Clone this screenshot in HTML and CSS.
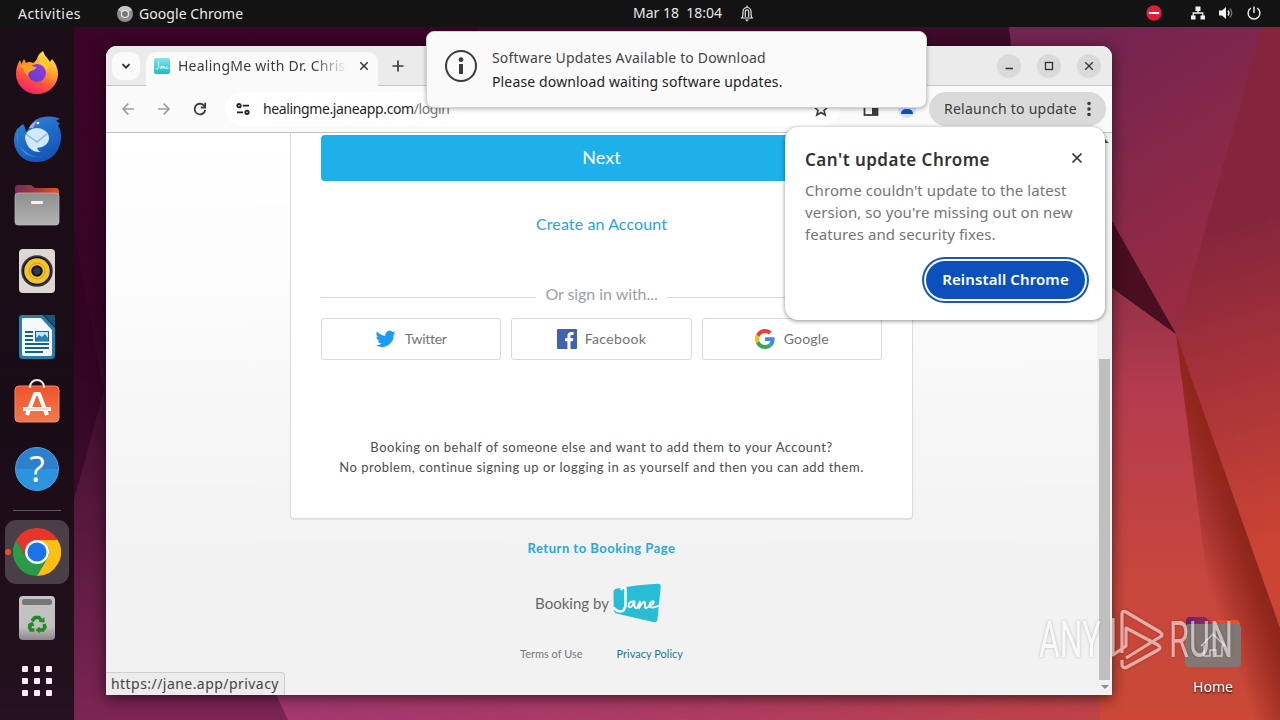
FILE: index.html
```html
<!DOCTYPE html>
<html lang="en">
<head>
<meta charset="utf-8">
<title>Desktop</title>
<link rel="stylesheet" href="styles.css">
</head>
<body>
<div class="screen">
  <svg class="wallpaper" width="1280" height="720" viewBox="0 0 1280 720">
    <defs>
      <linearGradient id="wLeft" x1="0" y1="0" x2="0" y2="1"><stop offset="0" stop-color="#3c0328"/><stop offset=".45" stop-color="#370525"/><stop offset=".6" stop-color="#471233"/><stop offset="1" stop-color="#7c2554"/></linearGradient>
      <linearGradient id="wBottom" x1="0" y1="0" x2="1" y2="0"><stop offset="0" stop-color="#a33870"/><stop offset=".45" stop-color="#ae3b60"/><stop offset="1" stop-color="#c8473a"/></linearGradient>
      <linearGradient id="wTop" gradientUnits="userSpaceOnUse" x1="1080" y1="40" x2="1220" y2="260"><stop offset="0" stop-color="#722450"/><stop offset="1" stop-color="#962b43"/></linearGradient>
      <linearGradient id="wRight" gradientUnits="userSpaceOnUse" x1="1200" y1="230" x2="1290" y2="540"><stop offset="0" stop-color="#84253c"/><stop offset=".5" stop-color="#a93439"/><stop offset="1" stop-color="#cc4433"/></linearGradient>
      <linearGradient id="wRose" x1="0" y1="0" x2="0" y2="1"><stop offset="0" stop-color="#8f3046"/><stop offset=".25" stop-color="#b43b4e"/><stop offset=".7" stop-color="#c8473c"/><stop offset="1" stop-color="#ca4835"/></linearGradient>
      <linearGradient id="wShade" gradientUnits="userSpaceOnUse" x1="1198" y1="560" x2="1252" y2="541"><stop offset="0" stop-color="#8a211c" stop-opacity="0"/><stop offset=".8" stop-color="#92271c"/><stop offset="1" stop-color="#8f241c"/></linearGradient>
    </defs>
    <rect width="1280" height="720" fill="url(#wLeft)"/>
    <path d="M74 235L104 390L74 500Z" fill="#2f0320" opacity=".6"/>
    <path d="M480 27H1010L1030 70H440Z" fill="#3d0a29"/>
    <path d="M276 694L288 720H1280V600H276Z" fill="url(#wBottom)"/>
    <path d="M1009 27H1280V340H1176L1018 110Z" fill="url(#wTop)"/>
    <path d="M1262 27H1280V640L1176 334Z" fill="url(#wRight)"/>
    <path d="M1100 279L1176 334L1280 628V720H1100Z" fill="url(#wRose)"/>
    <path d="M1176 334L1280 628V720H1225Z" fill="url(#wShade)"/>
    <path d="M1100 200L1176 334L1100 278Z" fill="#490e1f"/>
  </svg>

  <header class="topbar">
    <span class="activities">Activities</span>
    <span class="app-menu">
      <svg width="16" height="16" viewBox="0 0 16 16"><circle cx="8" cy="8" r="8" fill="#8d8d8d"/><path d="M8 8L1 4A8 8 0 0 1 15 4Z" fill="#c5c5c5"/><circle cx="8" cy="8" r="4" fill="#eee"/><circle cx="8" cy="8" r="2.9" fill="#777"/></svg>
      <span class="app-name">Google Chrome</span>
    </span>
    <span class="clock">Mar 18&nbsp; 18:04</span>
    <svg class="bell" width="14" height="17" viewBox="0 0 14 17" fill="none" stroke="#e8e8e8" stroke-width="1.200"><path d="M.8 13H13.200M2 13C3 11.500 3 9.500 3 6.500A4 4 0 0 1 11 6.500C11 9.500 11 11.500 12 13M5.300 12V6.500A1.700 1.700 0 0 1 8.700 6.500V12M7 .6V2.500"/><path d="M5 14.500H9L7 16.500Z" fill="#e8e8e8" stroke="none"/></svg>
    <div class="tray">
      <svg class="dnd" width="16" height="16" viewBox="0 0 16 16"><circle cx="8" cy="8" r="7.700" fill="#e01b3c"/><path d="M2.800 8H13.200" stroke="#fff" stroke-width="2"/></svg>
      <svg width="16" height="16" viewBox="0 0 16 16" fill="#f2f2f2"><path d="M5.500 1.500h5v4.500h-5zM1 10.500h4.500v4H1zM10.500 10.500H15v4h-4.500z"/><path d="M8 5V8M3.200 11V8H12.800V11" fill="none" stroke="#f2f2f2" stroke-width="1.300"/></svg>
      <svg width="16" height="16" viewBox="0 0 16 16"><path d="M1 5.500H4L8 2V14L4 10.500H1Z" fill="#f2f2f2"/><path d="M10 5.500Q11.800 8 10 10.500" fill="none" stroke="#f2f2f2" stroke-width="1.400"/><path d="M12 3.500Q15.400 8 12 12.500" fill="none" stroke="#777" stroke-width="1.300"/></svg>
      <svg width="16" height="16" viewBox="0 0 16 16" fill="none" stroke="#f2f2f2" stroke-width="1.400"><path d="M8 1.500V8M4.800 3.200A5.900 5.900 0 1 0 11.200 3.200"/></svg>
    </div>
  </header>

  <div class="below">
    <nav class="dock">
      <div class="dock-item">
        <svg width="44" height="44" viewBox="0 0 44 44"><defs><linearGradient id="ff" x1=".8" y1="0" x2=".3" y2="1"><stop offset="0" stop-color="#fff04a"/><stop offset=".4" stop-color="#ffa32a"/><stop offset=".7" stop-color="#ff4f3d"/><stop offset="1" stop-color="#f01f70"/></linearGradient><linearGradient id="fv" x1="0" y1="1" x2="1" y2="0"><stop offset="0" stop-color="#5b3fd0"/><stop offset="1" stop-color="#9a3ae0"/></linearGradient></defs><path d="M5 9L6.500 13L9 8L11 12Q14 10 18 12Q20 11 22 8Q23 3 28 0Q29 4 33 8L35 11L37 8Q43 15 43 23A21 20 0 0 1 1 23Q1 15 5 9Z" fill="url(#ff)"/><circle cx="22" cy="22" r="9" fill="url(#fv)"/><path d="M4 15Q11 12 17 15Q19 16 22 16Q20 19 16 20Q13 21 13 25Q9 22 9 18Z" fill="#ffa02c"/><path d="M23 12Q30 13 31 20Q35 17 34 11L29 6Q26 9 23 12Z" fill="#ffc934"/></svg>
      </div>
      <div class="dock-item">
        <svg width="48" height="48" viewBox="0 0 48 48"><defs><linearGradient id="tb" x1="0" y1="0" x2=".5" y2="1"><stop offset="0" stop-color="#2f86dd"/><stop offset="1" stop-color="#1556b5"/></linearGradient></defs><path d="M16 13Q21 2 34 1.500Q43 1 47 4L43 5.500L47 9L45 10Q50 19 47 29Q42 46 25 47Q8 48 2 32Q-1 22 4 14L10 9Q12 11 13 17Z" fill="url(#tb)"/><path d="M5 14Q1 30 12 36Q20 44 32 41Q16 45 8 34Q3 27 5 14Z" fill="#60b0f4" opacity=".6"/><path d="M16 13Q18 8 24 6L20 13Z" fill="#b8a3df"/><path d="M12 23A12 10 0 1 1 24 33Q25 36 28 37Q15 38 12 23Z" fill="#cfeafa"/><path d="M13 19L24 27L35 18" fill="none" stroke="#9ab4cb" stroke-width="1.500"/><circle cx="25" cy="8" r="1.300" fill="#fff"/></svg>
      </div>
      <div class="dock-item">
        <svg width="46" height="42" viewBox="0 0 46 42"><defs><linearGradient id="fo" x1="0" x2="1"><stop offset="0" stop-color="#7a2a55"/><stop offset=".5" stop-color="#a8383f"/><stop offset="1" stop-color="#ea5420"/></linearGradient><linearGradient id="fg" x1="0" y1="0" x2="0" y2="1"><stop offset="0" stop-color="#8f8f8f"/><stop offset="1" stop-color="#b2b2b2"/></linearGradient></defs><path d="M1 4Q1 1 4 1H17L21 4H42Q45 4 45 8V30H1Z" fill="url(#fo)"/><rect x="1" y="9" width="44" height="32" rx="3" fill="url(#fg)" stroke="#bbb" stroke-width=".7"/><rect x="17" y="17" width="12" height="3" rx="1" fill="#f4f4f4"/></svg>
      </div>
      <div class="dock-item">
        <svg width="36" height="44" viewBox="0 0 36 44"><rect width="36" height="44" rx="4" fill="#ddd9d2"/><circle cx="18" cy="22" r="15.800" fill="#36383e"/><circle cx="18" cy="22" r="14.200" fill="#151515"/><circle cx="18" cy="22" r="12.800" fill="#f5c22c"/><circle cx="18" cy="22" r="8" fill="none" stroke="#caa024" stroke-width="1"/><circle cx="18" cy="22" r="5.800" fill="#101820"/><circle cx="18" cy="22" r="3.500" fill="#2c3a4a"/></svg>
      </div>
      <div class="dock-item">
        <svg width="38" height="46" viewBox="0 0 38 46"><path d="M4 1H25L37 14V41Q37 45 33 45H4Q1 45 1 41V4Q1 1 4 1Z" fill="#267fa8"/><path d="M26 1H37V13Z" fill="#15587e"/><path d="M5 4H23L34 16V40Q34 42 32 42H6Q4 42 4 40V6Q4 4 5 4Z" fill="#f4f9fb"/><path d="M7 18H15M7 22H15M7 26H15M7 30H31M7 34H31M7 38H25" stroke="#17618b" stroke-width="2"/><rect x="17.500" y="17.500" width="13" height="9.500" fill="#bfe7fa" stroke="#17618b"/><path d="M18 27V24L21 21L24 23L27 20L30 24V27Z" fill="#2481b6"/></svg>
      </div>
      <div class="dock-item store">
        <svg width="46" height="46" viewBox="0 0 46 46"><defs><linearGradient id="so" x1="0" y1="0" x2="0" y2="1"><stop offset="0" stop-color="#f0522a"/><stop offset="1" stop-color="#f07a4d"/></linearGradient></defs><rect x="1" y="8" width="44" height="36" rx="4" fill="url(#so)" stroke="#f58a66"/><path d="M13 37L21 16H25L33 37M9 31H37" fill="none" stroke="#fff" stroke-width="4" stroke-linejoin="round"/><path d="M11 31H35" stroke="#e9b59f"/><path d="M16 10V9A7 7 0 0 1 30 9V10" fill="none" stroke="#f3e9e4" stroke-width="2"/></svg>
      </div>
      <div class="dock-item">
        <span class="help">?</span>
      </div>
      <div class="dock-sep"></div>
      <div class="dock-active">
        <svg width="48" height="48" viewBox="0 0 48 48"><path d="M24 12H44.800A24 24 0 0 0 3.200 12L13.600 30A12 12 0 0 1 24 12Z" fill="#e8352b"/><path d="M34.400 30L24 48A24 24 0 0 0 44.800 12H24A12 12 0 0 1 34.400 30Z" fill="#fcbf12"/><path d="M13.600 30L3.200 12A24 24 0 0 0 24 48L34.400 30A12 12 0 0 1 13.600 30Z" fill="#289a48"/><circle cx="24" cy="24" r="12" fill="#fff"/><circle cx="24" cy="24" r="9.600" fill="#1a73e8"/></svg>
      </div>
      <div class="dock-item">
        <svg width="36" height="44" viewBox="0 0 36 44"><defs><linearGradient id="tr" x1="0" y1="0" x2="0" y2="1"><stop offset="0" stop-color="#c4c4c4"/><stop offset=".7" stop-color="#c0c0c0"/><stop offset="1" stop-color="#8b858b"/></linearGradient></defs><rect width="36" height="44" rx="4" fill="url(#tr)"/><rect x="3" y="3" width="30" height="6" rx="2.500" fill="#777"/><g fill="none" stroke="#1e8c22" stroke-width="3.600"><path d="M13 25L16 21.500H20L22 24"/><path d="M25 28L26 31L24 34H20"/><path d="M15.500 34H12L10.500 31L12 28"/></g><path d="M19.500 26L25.500 26.500L25.500 21ZM20.500 30.500V37.500L16.800 34ZM8.500 28.500L13.500 25.500L15.500 30.500Z" fill="#1e8c22"/></svg>
      </div>
      <div class="dock-apps">
        <i></i><i></i><i></i><i></i><i></i><i></i><i></i><i></i><i></i>
      </div>
    </nav>
  </div>

  <main class="window">
    <div class="tabstrip">
      <div class="tab-search"><svg width="12" height="12" viewBox="0 0 12 12" fill="none" stroke="#333" stroke-width="1.900"><path d="M2.500 4.200L6 7.700L9.500 4.200"/></svg></div>
      <div class="tab">
        <svg width="16" height="16" viewBox="0 0 16 16"><defs><linearGradient id="fav" x1="0" y1="0" x2="0" y2="1"><stop offset="0" stop-color="#8be3e8"/><stop offset="1" stop-color="#17bcc9"/></linearGradient></defs><rect width="16" height="16" rx="2" fill="url(#fav)"/><path d="M4.500 3.500V10Q3.500 12.500 1.500 10.500M7.500 8Q5.500 9 6.500 10.500Q8 10 8 8V10.500L10 8V10.500Q11 8 11.500 10.500Q13 10 13 8.500Q11.500 9 13 10.700L15 10" fill="none" stroke="#e9fbfc" stroke-width=".8"/></svg>
        <span class="tab-title">HealingMe with Dr. Chris</span>
        <svg width="10" height="10" viewBox="0 0 10 10" stroke="#3c3c3c" stroke-width="1.600"><path d="M1.300 1.300L8.700 8.700M8.700 1.300L1.300 8.700"/></svg>
      </div>
      <svg class="tab-new" width="12" height="12" viewBox="0 0 12 12" stroke="#3c3c3c" stroke-width="1.700"><path d="M6 .5V11.500M.5 6H11.500"/></svg>
      <div class="win-controls">
        <span><svg width="10" height="10" viewBox="0 0 10 10"><path d="M1.500 7.500H9" stroke="#333" stroke-width="1.300"/></svg></span>
        <span><svg width="10" height="10" viewBox="0 0 10 10"><rect x="1.500" y="1.500" width="7" height="7" fill="none" stroke="#333" stroke-width="1.300"/></svg></span>
        <span><svg width="10" height="10" viewBox="0 0 10 10"><path d="M1.200 1.200L8.800 8.800M8.800 1.200L1.200 8.800" stroke="#333" stroke-width="1.300"/></svg></span>
      </div>
    </div>

    <div class="toolbar">
      <svg width="14" height="14" viewBox="0 0 14 14" fill="none" stroke="#a0a0a0" stroke-width="1.700"><path d="M13 7H2M7.300 1.700L2 7L7.300 12.300"/></svg>
      <svg width="14" height="14" viewBox="0 0 14 14" fill="none" stroke="#a0a0a0" stroke-width="1.700"><path d="M1 7H12M6.700 1.700L12 7L6.700 12.300"/></svg>
      <svg width="14" height="14" viewBox="0 0 14 14" fill="none" stroke="#3c3c3c" stroke-width="1.800"><path d="M12.200 7.800A5.300 5.300 0 1 1 10.800 3.400L12 4.800"/><path d="M12.200 .8V5.500H7.800" /></svg>
      <div class="omnibox">
        <svg width="14" height="14" viewBox="0 0 14 14" fill="none" stroke="#202020" stroke-width="1.800"><circle cx="3" cy="3.700" r="1.700"/><path d="M6.700 3.700H13M1 10.300H7"/><circle cx="11" cy="10.300" r="1.700"/></svg>
        <span class="url">healingme.janeapp.com<span class="url-path">/login</span></span>
        <svg class="star" width="16" height="16" viewBox="0 0 16 16" fill="none" stroke="#3c3c3c" stroke-width="1.600"><path d="M8 1.500L9.900 6L14.500 6.300L11 9.400L12.200 14L8 11.500L3.800 14L5 9.400L1.500 6.300L6.100 6Z"/></svg>
      </div>
      <svg class="panel-icon" width="16" height="16" viewBox="0 0 16 16"><rect x="1.500" y="2" width="13" height="12" fill="none" stroke="#3c3c3c" stroke-width="1.800"/><path d="M9 2H15V14H9Z" fill="#3c3c3c"/></svg>
      <svg class="avatar" width="20" height="20" viewBox="0 0 20 20"><circle cx="10" cy="10" r="9" fill="#d3e3fd"/><circle cx="10" cy="5" r="3" fill="#0b57d0"/><path d="M4 15Q4 10 10 10T16 15Z" fill="#0b4fc0"/></svg>
      <div class="relaunch"><span>Relaunch to update</span>
        <svg width="4" height="16" viewBox="0 0 4 16" fill="#3c3c3c"><circle cx="2" cy="2.500" r="1.800"/><circle cx="2" cy="8" r="1.800"/><circle cx="2" cy="13.500" r="1.800"/></svg>
      </div>
    </div>

    <div class="viewport">
      <div class="page">
        <section class="card">
          <div class="next">Next</div>
          <div class="create">Create an Account</div>
          <div class="divider"><span>Or sign in with...</span></div>
          <div class="providers">
            <div class="provider twitter">
              <svg width="20" height="18" viewBox="0 0 24 20" fill="#1d9bf0"><path d="M23.600 2.400a9.700 9.700 0 0 1-2.800.8 4.900 4.900 0 0 0 2.100-2.700 9.700 9.700 0 0 1-3.100 1.200 4.900 4.900 0 0 0-8.400 4.500A13.900 13.900 0 0 1 1.300 1 4.900 4.900 0 0 0 2.800 7.600a4.900 4.900 0 0 1-2.200-.6 4.900 4.900 0 0 0 3.900 4.900 4.900 4.900 0 0 1-2.200.1 4.900 4.900 0 0 0 4.600 3.400A9.900 9.900 0 0 1-.3 17.400a13.900 13.900 0 0 0 21.400-12.400 9.900 9.900 0 0 0 2.500-2.600z"/></svg>
              <span>Twitter</span>
            </div>
            <div class="provider">
              <svg width="20" height="20" viewBox="0 0 20 20"><rect width="20" height="20" rx="1" fill="#4162ae"/><path d="M13.500 20V12.300H16L16.400 9.300H13.500V7.400C13.500 6.500 13.800 6 15 6H16.600V3.200C16.300 3.150 15.300 3.050 14.200 3.050C12 3.050 10.400 4.400 10.400 7V9.300H8V12.300H10.400V20Z" fill="#fff"/></svg>
              <span>Facebook</span>
            </div>
            <div class="provider google">
              <svg width="20" height="20" viewBox="0 0 48 48"><path fill="#EA4335" d="M24 9.500c3.540 0 6.710 1.220 9.210 3.600l6.850-6.850C35.900 2.380 30.470 0 24 0 14.620 0 6.510 5.380 2.560 13.220l7.980 6.190C12.430 13.720 17.740 9.500 24 9.500z"/><path fill="#4285F4" d="M46.980 24.550c0-1.570-.15-3.090-.38-4.550H24v9.020h12.940c-.58 2.960-2.260 5.480-4.780 7.180l7.730 6c4.510-4.180 7.090-10.360 7.090-17.650z"/><path fill="#FBBC05" d="M10.530 28.590c-.48-1.450-.76-2.990-.76-4.590s.27-3.140.76-4.590l-7.980-6.190C.92 16.460 0 20.120 0 24c0 3.880.92 7.540 2.560 10.780l7.970-6.190z"/><path fill="#34A853" d="M24 48c6.480 0 11.930-2.130 15.890-5.810l-7.730-6c-2.150 1.450-4.920 2.300-8.160 2.300-6.260 0-11.570-4.220-13.470-9.910l-7.980 6.190C6.510 42.620 14.620 48 24 48z"/></svg>
              <span>Google</span>
            </div>
          </div>
          <p class="note">Booking on behalf of someone else and want to add them to your Account?<br>No problem, continue signing up or logging in as yourself and then you can add them.</p>
        </section>
        <a class="return">Return to Booking Page</a>
        <div class="brand"><span>Booking by</span>
          <svg width="48" height="40" viewBox="0 0 48 40"><path d="M4 5.500Q22 2 45 .7Q48 .7 47.700 4L44.500 36Q44 40 40 39L3.500 30.500Q.8 29.800 .7 27L.5 9Q.5 6.200 4 5.500Z" fill="#27bdd6"/><path d="M8.500 6Q12 3 12.500 6V22Q12 28.500 7 28.500Q3 28 1 25" fill="none" stroke="#fff" stroke-width="2.600" stroke-linecap="round"/><path d="M21.500 18.500Q15.500 18 15.500 23Q17.500 27 21.500 19Q20.500 26 24 25L27 18.500L26 25Q31 16.500 32 19.500V24.500Q34 26 37 22M36.500 22.500Q42 21 40.500 18.500Q37 18 36.500 22Q37 27 46 22.500" fill="none" stroke="#fff" stroke-width="1.900" stroke-linecap="round" stroke-linejoin="round"/></svg>
        </div>
        <div class="legal"><span>Terms of Use</span><span class="privacy">Privacy Policy</span></div>
      </div>
      <div class="scrollbar"><i class="sb-up"></i><div class="sb-thumb"></div><i class="sb-down"></i></div>
      <div class="status">https://jane.app/privacy</div>
    </div>
  </main>

  <aside class="bubble">
    <div class="bubble-head"><span class="bubble-title">Can't update Chrome</span>
      <svg width="12" height="12" viewBox="0 0 12 12" stroke="#333" stroke-width="1.700"><path d="M1.500 1.500L10.500 10.500M10.500 1.500L1.500 10.500"/></svg>
    </div>
    <p class="bubble-text">Chrome couldn't update to the latest<br>version, so you're missing out on new<br>features and security fixes.</p>
    <div class="reinstall">Reinstall Chrome</div>
  </aside>

  <aside class="toast">
    <svg width="32" height="32" viewBox="0 0 32 32"><circle cx="16" cy="16" r="15" fill="none" stroke="#3b3b3b" stroke-width="2"/><circle cx="16" cy="9.700" r="2.400" fill="#3b3b3b"/><rect x="14" y="14" width="4" height="10" fill="#3b3b3b"/></svg>
    <div><div class="toast-title">Software Updates Available to Download</div><div class="toast-body">Please download waiting software updates.</div></div>
  </aside>

  <div class="home">
    <svg width="56" height="52" viewBox="0 0 56 52"><defs><linearGradient id="hf" x1="0" x2="1"><stop offset="0" stop-color="#6d1f74"/><stop offset=".38" stop-color="#8c2760"/><stop offset=".5" stop-color="#d84a38"/><stop offset="1" stop-color="#ec5522"/></linearGradient></defs><path d="M1 5Q1 1 5 1H20L24 4H51Q55 4 55 9V30H1Z" fill="url(#hf)"/><rect x="0" y="8" width="56" height="43" rx="4" fill="#827773"/><path d="M16 30L28 18L40 30M19 29V40H25V34H31V40H37V29" fill="none" stroke="#ccc" stroke-width="1.500"/></svg>
    <span>Home</span>
  </div>
  <svg class="watermark" width="200" height="70" viewBox="0 0 200 70">
    <text x="3" y="49" textLength="62" lengthAdjust="spacingAndGlyphs">ANY</text>
    <text x="133" y="49" textLength="64" lengthAdjust="spacingAndGlyphs">RUN</text>
    <g class="mark"><path d="M86 45V6Q86 2 90 4L124 24Q128 27 124 29L90 50"/><path d="M77 10V47L90 38V20L122 37Q126 40 122 42L91 59Q87 61 86 57V52"/></g>
  </svg>
</div>
</body>
</html>
```
FILE: styles.css
```css
* { box-sizing: border-box; }
body { margin: 0; font-family: "Noto Sans", "Open Sans", sans-serif; overflow: hidden; }
svg { display: block; flex: none; }
.screen { position: relative; width: 1280px; height: 720px; overflow: hidden; background: #3c0328; white-space: nowrap; }
.wallpaper { position: absolute; left: 0; top: 0; }

/* top panel */
.topbar { position: relative; display: flex; align-items: center; height: 27px; padding: 0 17px 0 18px; background: #131313; color: #e9e9e9; font-size: 14px; line-height: 27px; }
.activities { width: 99px; letter-spacing: .46px; }
.app-menu { display: flex; align-items: center; gap: 6px; width: 516px; }
.app-name { letter-spacing: .06px; }
.clock { width: 107px; padding-bottom: 2px; line-height: 25px; }
.bell { margin-bottom: 1px; }
.tray { display: flex; align-items: center; gap: 12px; margin: 0 1px 1px auto; }
.dnd { margin-right: 16px; }

/* dock */
.below { position: relative; display: flex; height: 693px; }
.dock { width: 74px; padding-top: 13px; background: linear-gradient(#1b0e17, #1a0c16 60%, #25111f); display: flex; flex-direction: column; align-items: center; }
.dock-item { height: 66px; width: 66px; display: flex; align-items: center; justify-content: center; }
.store { padding-bottom: 5px; }
.help { width: 44px; height: 44px; border-radius: 50%; background: linear-gradient(#2c80ce 0 50%, #2c93df 50%); border: 1px solid #4ea1e2; color: #fff; font-family: "Open Sans", sans-serif; font-size: 36px; line-height: 42px; text-align: center; }
.dock-sep { width: 48px; height: 1px; margin: 8px 0 9px; background: #635a60; }
.dock-active { position: relative; width: 64px; height: 64px; border-radius: 11px; background: #4a3f47; display: flex; align-items: center; justify-content: center; margin-bottom: 1px; }
.dock-active::before { content: ""; position: absolute; left: 0; top: 29px; width: 6px; height: 6px; border-radius: 3px; background: #e95420; }
.dock-apps { display: grid; grid-template-columns: repeat(3, 6px); gap: 6px; margin-top: 15px; }
.dock-apps i { width: 6px; height: 6px; border-radius: 1px; background: #fbeefa; }

/* browser window */
.window { position: absolute; left: 106px; top: 46px; width: 1006px; height: 649px; display: flex; flex-direction: column; border-radius: 11px 11px 0 0; overflow: hidden; background: #fafafa; box-shadow: 0 3px 14px rgba(0,0,0,.6); }
.tabstrip { display: flex; align-items: center; height: 40px; padding: 0 11px 0 6px; background: #ebebeb; border-bottom: 1px solid #c4c4c4; }
.tab-search { width: 28px; height: 28px; border-radius: 9px; background: #fafafa; display: flex; align-items: center; justify-content: center; }
.tab { display: flex; align-items: center; width: 232px; height: 34px; margin: 6px 0 0 6px; align-self: flex-start; padding: 0 11px 7px 8px; border-radius: 10px 10px 0 0; background: #fafafa; }
.tab-title { width: 170px; margin: 0 13px 0 8px; font-size: 14px; letter-spacing: .25px; color: #3c3c3c; -webkit-mask-image: linear-gradient(90deg, #000 80%, transparent 101%); mask-image: linear-gradient(90deg, #000 80%, transparent 101%); }
.tab-new { margin-left: 14px; }
.win-controls { display: flex; gap: 16px; margin-left: auto; }
.win-controls span { width: 24px; height: 24px; border-radius: 50%; background: #dadada; display: flex; align-items: center; justify-content: center; }
.toolbar { display: flex; align-items: center; height: 47px; padding: 0 6px 0 15px; background: #fafafa; border-bottom: 1px solid #c4c4c4; }
.toolbar > svg:nth-child(2), .toolbar > svg:nth-child(3) { margin-left: 22px; }
.omnibox { display: flex; align-items: center; width: 615px; height: 34px; margin-left: 18px; padding: 0 11px; border-radius: 17px; background: #fff; }
.url { margin-left: 13px; padding-bottom: 2px; font-size: 14px; color: #1f1f1f; letter-spacing: -.38px; }
.url-path { color: #747474; letter-spacing: -.4px; }
.star { margin-left: auto; }
.panel-icon { margin-left: 23px; }
.avatar { margin: 0 12px 0 18px; }
.relaunch { display: flex; align-items: center; justify-content: space-between; width: 177px; height: 34px; padding: 0 15px; border-radius: 17px; background: #dadada; color: #3c3c3c; font-size: 14px; letter-spacing: .26px; }
.relaunch span { padding-bottom: 2px; }

/* web page */
.viewport { position: relative; display: flex; flex: 1; min-height: 0; }
.page { flex: 1; display: flex; flex-direction: column; align-items: center; background: linear-gradient(#fff, #fcfcfc 25%, #f2f2f2 75%); font-family: Lato, sans-serif; }
.card { width: 623px; height: 386px; padding: 2px 30px 0; background: #fff; border: 1px solid #dcdcdc; border-top: 0; border-radius: 0 0 4px 4px; box-shadow: 0 1px 1px rgba(0,0,0,.08); }
.next { height: 46px; border-radius: 4px; background: #1eb0e9; color: #fff; font-size: 18px; line-height: 44px; text-align: center; letter-spacing: .05px; }
.create { margin-top: 31px; height: 24px; line-height: 24px; text-align: center; font-size: 16px; color: #27a5db; letter-spacing: .1px; }
.divider { display: flex; align-items: center; gap: 9px; margin-top: 46px; height: 26px; font-size: 16px; color: #9c9fa5; letter-spacing: -.06px; }
.divider::before, .divider::after { content: ""; flex: 1; height: 1px; margin-top: 4px; background: #d7d7d9; }
.divider span { margin-top: -4px; }
.providers { display: grid; grid-template-columns: repeat(3, 1fr); gap: 10px; margin-top: 10px; }
.provider { display: flex; align-items: center; justify-content: center; gap: 8px; height: 42px; border: 1px solid #d9dadc; border-radius: 3px; font-size: 14px; color: #717377; letter-spacing: .36px; }
.provider span { padding-bottom: 2px; }
.twitter { letter-spacing: -.3px; gap: 9px; }
.google { letter-spacing: .2px; gap: 9px; }
.note { margin: 77px -20px 0; font-size: 13px; line-height: 20px; text-align: center; color: #4b4d50; letter-spacing: .49px; }
.return { margin-top: 19px; height: 21px; line-height: 20px; font-size: 13px; font-weight: 700; color: #2aa7dc; letter-spacing: .5px; }
.brand { display: flex; align-items: center; gap: 4px; margin: 24px 7px 0 0; font-size: 15px; color: #66686b; }
.legal { display: flex; gap: 34px; margin-top: 23px; font-size: 11px; line-height: 16px; color: #76787e; }
.privacy { color: #1d7b8c; }
.scrollbar { width: 15px; background: #f1f1f1; display: flex; flex-direction: column; align-items: center; justify-content: flex-end; }
.sb-thumb { width: 11px; height: 321px; background: #bfbfbf; margin-bottom: 5px; }
.sb-up, .sb-down { border: 4px solid transparent; }
.sb-up { border-bottom-color: #505050; margin: 2px 0 auto; }
.sb-down { border-top-color: #8f8f8f; border-bottom: 0; margin-bottom: 6px; }
.status { position: absolute; left: 0; bottom: 0; width: 179px; height: 23px; padding-left: 5px; border: 1px solid #d0d0d0; border-width: 1px 1px 0 0; border-radius: 0 4px 0 0; background: #ececec; color: #444; font-size: 14px; line-height: 22px; letter-spacing: .45px; }

/* update bubble */
.bubble { position: absolute; left: 785px; top: 127px; width: 320px; height: 193px; padding: 20px; border-radius: 13px; background: #fff; box-shadow: 0 1px 4px rgba(0,0,0,.45); display: flex; flex-direction: column; }
.bubble-head { display: flex; justify-content: space-between; align-items: center; height: 24px; padding-right: 2px; }
.bubble-head svg { margin-bottom: 2px; }
.bubble-title { font-size: 17px; font-weight: 600; color: #333; letter-spacing: .48px; }
.bubble-text { margin: 8px 0 0; font-size: 15px; line-height: 22px; color: #757575; letter-spacing: .08px; }
.reinstall { align-self: flex-end; width: 159px; height: 38px; margin-top: 16px; border-radius: 19px; background: #0b50bd; color: #fff; font-size: 15px; font-weight: 600; line-height: 37px; text-align: center; letter-spacing: .12px; box-shadow: 0 0 0 2px #fff, 0 0 0 4px #1757b5; }

/* desktop notification */
.toast { position: absolute; left: 426px; top: 31px; width: 501px; height: 77px; padding: 16px 18px; display: flex; gap: 15px; border-radius: 8px; background: #fafafa; border: 1px solid #d2d0d1; box-shadow: 0 1px 4px rgba(0,0,0,.3); font-size: 14px; line-height: 24px; }
.toast > svg { margin-top: 2px; }
.toast > div { margin-top: -2px; }
.toast-title { color: #444; letter-spacing: .18px; }
.toast-body { color: #222; letter-spacing: .14px; }

/* desktop icon and overlay mark */
.home { position: absolute; left: 1178px; top: 616px; width: 70px; display: flex; flex-direction: column; align-items: center; gap: 9px; color: #fff; font-size: 14px; line-height: 20px; text-shadow: 0 1px 2px #000; }
.watermark { position: absolute; left: 1036px; top: 608px; overflow: visible; filter: drop-shadow(0 0 1.5px rgba(0,0,0,.4)); opacity: .55; }
.watermark text { font-family: Roboto, sans-serif; font-weight: 400; font-size: 50px; fill: #fff; }
.mark { fill: none; stroke: #fff; stroke-width: 3.2px; stroke-linejoin: round; }
```
